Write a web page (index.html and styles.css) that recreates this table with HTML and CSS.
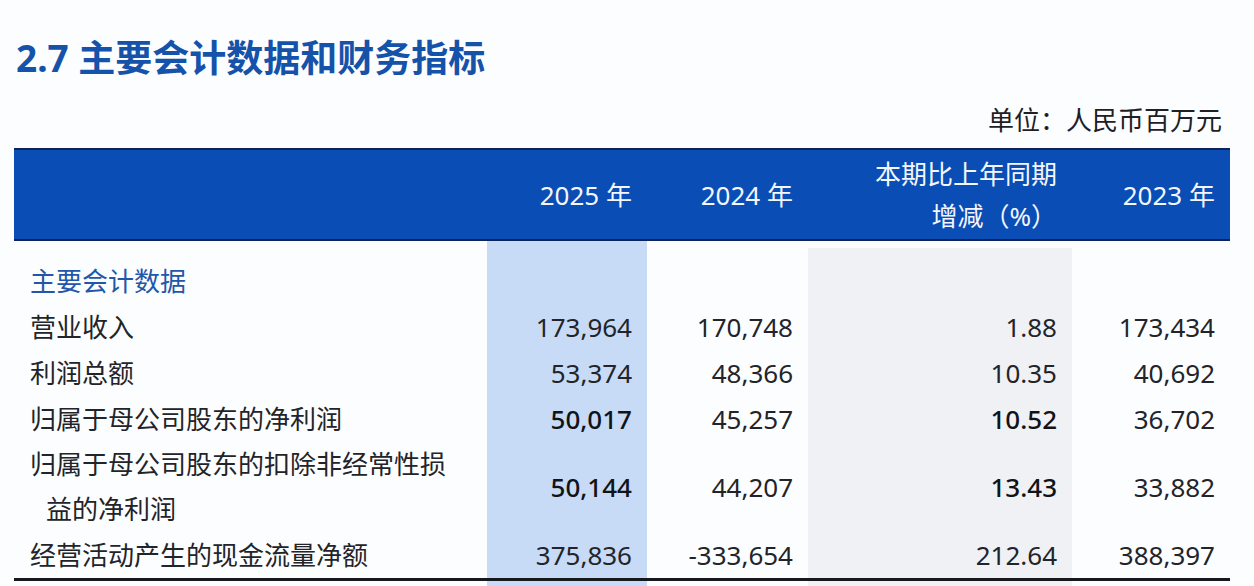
FILE: index.html
```html
<!DOCTYPE html>
<html lang="zh-CN">
<head>
<meta charset="utf-8">
<link rel="stylesheet" href="styles.css">
</head>
<body>
<div class="page">
  <h1 class="title">2.7 主要会计数据和财务指标</h1>
  <div class="unit">单位：人民币百万元</div>
  <table class="fin">
    <colgroup>
      <col class="w-label"><col class="w-c1"><col class="w-c2"><col class="w-c3"><col class="w-c4">
    </colgroup>
    <thead>
      <tr class="head">
        <th class="label"></th>
        <th class="num">2025 年</th>
        <th class="num">2024 年</th>
        <th class="num">本期比上年同期<br>增减（%）</th>
        <th class="num">2023 年</th>
      </tr>
    </thead>
    <tbody>
      <tr class="spacer"><td></td><td class="c1"></td><td></td><td class="c3 gtop"></td><td></td></tr>
      <tr class="row">
        <td class="label section">主要会计数据</td>
        <td class="num c1"></td><td class="num"></td><td class="num c3"></td><td class="num"></td>
      </tr>
      <tr class="row">
        <td class="label">营业收入</td>
        <td class="num c1">173,964</td><td class="num">170,748</td><td class="num c3">1.88</td><td class="num">173,434</td>
      </tr>
      <tr class="row">
        <td class="label">利润总额</td>
        <td class="num c1">53,374</td><td class="num">48,366</td><td class="num c3">10.35</td><td class="num">40,692</td>
      </tr>
      <tr class="row">
        <td class="label">归属于母公司股东的净利润</td>
        <td class="num c1 strong">50,017</td><td class="num">45,257</td><td class="num c3 strong">10.52</td><td class="num">36,702</td>
      </tr>
      <tr class="row double">
        <td class="label hang">归属于母公司股东的扣除非经常性损<br>益的净利润</td>
        <td class="num c1 strong">50,144</td><td class="num">44,207</td><td class="num c3 strong">13.43</td><td class="num">33,882</td>
      </tr>
      <tr class="row">
        <td class="label">经营活动产生的现金流量净额</td>
        <td class="num c1">375,836</td><td class="num">-333,654</td><td class="num c3">212.64</td><td class="num">388,397</td>
      </tr>
      <tr class="tail"><td></td><td class="c1"></td><td></td><td class="c3"></td><td></td></tr>
    </tbody>
  </table>
</div>
</body>
</html>
```
FILE: styles.css
```css
html, body {
  margin: 0;
  padding: 0;
  background: #fcfdfe;
}
body {
  font-family: "Noto Sans", "Noto Sans CJK SC", sans-serif;
  color: #222429;
  width: 1254px;
  height: 586px;
  overflow: hidden;
}
.page {
  padding: 30px 24px 0 14px;
}
.title {
  margin: 0 0 0 2px;
  font-size: 37px;
  line-height: 56px;
  font-weight: 700;
  color: #1552aa;
}
.unit {
  margin-top: 14px;
  padding-right: 8px;
  text-align: right;
  font-size: 26px;
  line-height: 40px;
  color: #1e2024;
}
.fin {
  margin-top: 8px;
  width: 1216px;
  border-collapse: collapse;
  table-layout: fixed;
}
.w-label { width: 473px; }
.w-c1 { width: 160px; }
.w-c2 { width: 161px; }
.w-c3 { width: 264px; }
.w-c4 { width: 158px; }

.head th {
  background: #0a4db5;
  color: #f3f6fc;
  font-weight: 400;
  font-size: 26px;
  line-height: 42px;
  height: 89px;
  padding: 0 15px 0 0;
  border-top: 2px solid #0d2459;
  border-bottom: 2px solid #0d2459;
  vertical-align: middle;
}
.head th.num { text-align: right; }

td {
  padding: 0;
  font-size: 26px;
}
.spacer td { height: 17px; }
.row td {
  height: 46px;
  line-height: 46px;
  vertical-align: middle;
}
.row.double td {
  height: 90px;
  line-height: 45px;
}
.label {
  padding-left: 16px;
  text-align: left;
  white-space: nowrap;
}
.hang {
  text-indent: -16px;
}
.row td.label { padding-left: 16px; }
.row td.hang { padding-left: 32px; }
.section { color: #2356a8; }
.num {
  text-align: right;
  padding-right: 15px !important;
  white-space: nowrap;
}
.strong { font-weight: 500; color: #111317; }
.c1 { background: #c7dbf7; }
.c3 { background: #f0f1f4; }
.spacer .gtop {
  background: linear-gradient(#fcfdfe 0 7px, #f0f1f4 7px);
}
.tail td {
  height: 6px;
  border-top: 3px solid #17181c;
}
```
